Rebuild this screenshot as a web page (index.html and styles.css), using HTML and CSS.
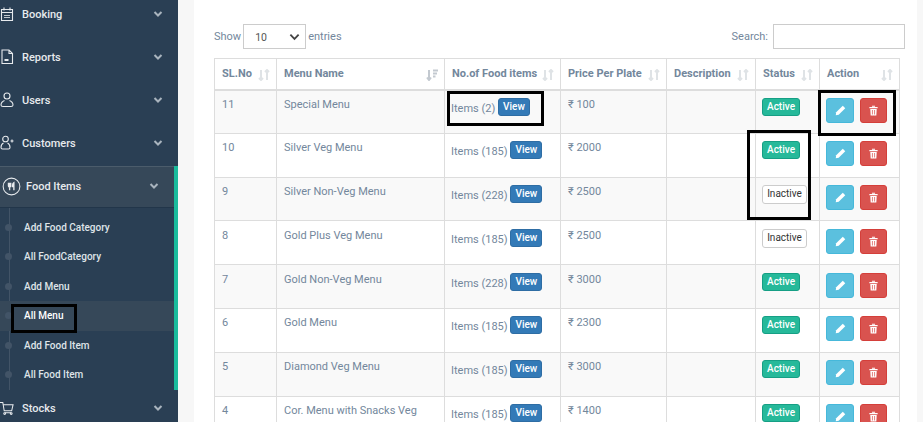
FILE: index.html
```html
<!DOCTYPE html>
<html lang="en">
<head>
<meta charset="utf-8">
<title>All Menu</title>
<link rel="stylesheet" href="styles.css">
</head>
<body>
<div class="app">
<aside class="sidebar">
  <div class="nav-item first"><svg class="nav-icon" viewBox="0 0 14 15"><path d="M1.500 3h11v11h-11zM1.500 6h11M4 1v3M10 1v3"/><path class="thin" d="M4 9h6M4 11h6"/></svg><span>Booking</span><svg class="chev" viewBox="0 0 10 6"><path d="M1.500 1l3.500 3.500L8.500 1"/></svg></div>
  <div class="nav-item"><svg class="nav-icon" viewBox="0 0 14 16"><path d="M2 1h7l3.500 3.500V14.500H2zM9 1v3.500h3.500"/><path class="solid" d="M4.500 10h4v2h-4z"/></svg><span>Reports</span><svg class="chev" viewBox="0 0 10 6"><path d="M1.500 1l3.500 3.500L8.500 1"/></svg></div>
  <div class="nav-item"><svg class="nav-icon" viewBox="0 0 14 16"><circle cx="7" cy="4" r="3"/><path d="M4.500 8.500C2 9.500 1 11 1 13c0 1 1 1.500 2 1.500h8c1 0 2-.5 2-1.500 0-2-1-3.500-3.500-4.500"/></svg><span>Users</span><svg class="chev" viewBox="0 0 10 6"><path d="M1.500 1l3.500 3.500L8.500 1"/></svg></div>
  <div class="nav-item"><svg class="nav-icon" viewBox="0 0 14 16"><circle cx="5.500" cy="4" r="2.800"/><path d="M3.500 8C1.500 9 1 10.500 1 12.500c0 1 .8 1.500 1.500 1.500h6c1 0 1.500-.5 1.500-1.500 0-2-.5-3.500-2.500-4.500M10.500 6h3M12 4.500v3"/></svg><span>Customers</span><svg class="chev" viewBox="0 0 10 6"><path d="M1.500 1l3.500 3.500L8.500 1"/></svg></div>
  <div class="nav-group">
    <div class="nav-item open"><svg class="food-icon" viewBox="0 0 20 20"><circle cx="10" cy="10" r="8.800"/><path class="cutlery" d="M6.800 6v3.500c0 .8.500 1 1.200 1s1.200-.2 1.200-1V6M8 6v8M12.500 14V6c-1 .5-1.500 2-1.500 4h1.500"/></svg><span>Food Items</span><svg class="chev" viewBox="0 0 10 6"><path d="M1.500 1l3.500 3.500L8.500 1"/></svg></div>
    <ul class="submenu">
      <li>Add Food Category</li>
      <li>All FoodCategory</li>
      <li>Add Menu</li>
      <li class="current">All Menu</li>
      <li>Add Food Item</li>
      <li>All Food Item</li>
    </ul>
  </div>
  <div class="nav-item last"><svg class="nav-icon" viewBox="0 0 15 15"><path d="M0 1.500h3l1.500 9h8l1.500-6.500H3.500M5 12.500h7"/><circle cx="5" cy="13.500" r="1"/><circle cx="12" cy="13.500" r="1"/></svg><span>Stocks</span><svg class="chev" viewBox="0 0 10 6"><path d="M1.500 1l3.500 3.500L8.500 1"/></svg></div>
</aside>
<main class="main">
  <div class="panel">
    <div class="controls">
      <label class="length">Show <span class="select"><span>10</span><svg viewBox="0 0 12 8"><path d="M1.500 1.500L6 6l4.500-4.500"/></svg></span> entries</label>
      <label class="search">Search: <span class="search-box"></span></label>
    </div>
    <table class="grid">
      <thead>
        <tr>
          <th>SL.No<svg class="sort" viewBox="0 0 12 12"><path d="M3 1v10M1 9l2 2 2-2M9 11V1M7 3l2-2 2 2"/></svg></th>
          <th>Menu Name<svg class="sort on" viewBox="0 0 12 12"><path d="M3 1v10M1 8.500l2 2.500 2-2.500M7 1.500h5M7 4.500h4M7 7.500h2.500"/></svg></th>
          <th>No.of Food items<svg class="sort" viewBox="0 0 12 12"><path d="M3 1v10M1 9l2 2 2-2M9 11V1M7 3l2-2 2 2"/></svg></th>
          <th>Price Per Plate<svg class="sort" viewBox="0 0 12 12"><path d="M3 1v10M1 9l2 2 2-2M9 11V1M7 3l2-2 2 2"/></svg></th>
          <th>Description<svg class="sort" viewBox="0 0 12 12"><path d="M3 1v10M1 9l2 2 2-2M9 11V1M7 3l2-2 2 2"/></svg></th>
          <th>Status<svg class="sort" viewBox="0 0 12 12"><path d="M3 1v10M1 9l2 2 2-2M9 11V1M7 3l2-2 2 2"/></svg></th>
          <th>Action<svg class="sort" viewBox="0 0 12 12"><path d="M3 1v10M1 9l2 2 2-2M9 11V1M7 3l2-2 2 2"/></svg></th>
        </tr>
      </thead>
      <tbody>
        <tr><td>11</td><td>Special Menu</td><td class="items"><span class="count">Items (2)</span> <a class="view">View</a></td><td>₹ 100</td><td></td><td class="st"><span class="pill active">Active</span></td><td class="acts"><a class="act edit"><svg viewBox="0 0 12 12"><path d="M8.500 .8l2.700 2.700L4 10.700 .8 11.200l.5-3.200z"/></svg></a><a class="act del"><svg viewBox="0 0 12 12"><path fill-rule="evenodd" d="M1.500 2.300h9v1.300h-9zM4.300 .8h3.400v1.200H4.300zM2.500 4.300h7l-.4 7.200H2.900zM4.300 5.500v4.800h.8V5.500zM6.900 5.500v4.800h.8V5.500z"/></svg></a></td></tr>
        <tr><td>10</td><td>Silver Veg Menu</td><td class="items"><span class="count">Items (185)</span> <a class="view">View</a></td><td>₹ 2000</td><td></td><td class="st"><span class="pill active">Active</span></td><td class="acts"><a class="act edit"><svg viewBox="0 0 12 12"><path d="M8.500 .8l2.700 2.700L4 10.700 .8 11.200l.5-3.200z"/></svg></a><a class="act del"><svg viewBox="0 0 12 12"><path fill-rule="evenodd" d="M1.500 2.300h9v1.300h-9zM4.300 .8h3.400v1.200H4.300zM2.500 4.300h7l-.4 7.200H2.900zM4.300 5.500v4.800h.8V5.500zM6.900 5.500v4.800h.8V5.500z"/></svg></a></td></tr>
        <tr><td>9</td><td>Silver Non-Veg Menu</td><td class="items"><span class="count">Items (228)</span> <a class="view">View</a></td><td>₹ 2500</td><td></td><td class="st"><span class="pill inactive">Inactive</span></td><td class="acts"><a class="act edit"><svg viewBox="0 0 12 12"><path d="M8.500 .8l2.700 2.700L4 10.700 .8 11.200l.5-3.200z"/></svg></a><a class="act del"><svg viewBox="0 0 12 12"><path fill-rule="evenodd" d="M1.500 2.300h9v1.300h-9zM4.300 .8h3.400v1.200H4.300zM2.500 4.300h7l-.4 7.200H2.900zM4.300 5.500v4.800h.8V5.500zM6.900 5.500v4.800h.8V5.500z"/></svg></a></td></tr>
        <tr><td>8</td><td>Gold Plus Veg Menu</td><td class="items"><span class="count">Items (185)</span> <a class="view">View</a></td><td>₹ 2500</td><td></td><td class="st"><span class="pill inactive">Inactive</span></td><td class="acts"><a class="act edit"><svg viewBox="0 0 12 12"><path d="M8.500 .8l2.700 2.700L4 10.700 .8 11.200l.5-3.200z"/></svg></a><a class="act del"><svg viewBox="0 0 12 12"><path fill-rule="evenodd" d="M1.500 2.300h9v1.300h-9zM4.300 .8h3.400v1.200H4.300zM2.500 4.300h7l-.4 7.200H2.900zM4.300 5.500v4.800h.8V5.500zM6.900 5.500v4.800h.8V5.500z"/></svg></a></td></tr>
        <tr><td>7</td><td>Gold Non-Veg Menu</td><td class="items"><span class="count">Items (228)</span> <a class="view">View</a></td><td>₹ 3000</td><td></td><td class="st"><span class="pill active">Active</span></td><td class="acts"><a class="act edit"><svg viewBox="0 0 12 12"><path d="M8.500 .8l2.700 2.700L4 10.700 .8 11.200l.5-3.200z"/></svg></a><a class="act del"><svg viewBox="0 0 12 12"><path fill-rule="evenodd" d="M1.500 2.300h9v1.300h-9zM4.300 .8h3.400v1.200H4.300zM2.500 4.300h7l-.4 7.200H2.900zM4.300 5.500v4.800h.8V5.500zM6.900 5.500v4.800h.8V5.500z"/></svg></a></td></tr>
        <tr><td>6</td><td>Gold Menu</td><td class="items"><span class="count">Items (185)</span> <a class="view">View</a></td><td>₹ 2300</td><td></td><td class="st"><span class="pill active">Active</span></td><td class="acts"><a class="act edit"><svg viewBox="0 0 12 12"><path d="M8.500 .8l2.700 2.700L4 10.700 .8 11.200l.5-3.200z"/></svg></a><a class="act del"><svg viewBox="0 0 12 12"><path fill-rule="evenodd" d="M1.500 2.300h9v1.300h-9zM4.300 .8h3.400v1.200H4.300zM2.500 4.300h7l-.4 7.200H2.900zM4.300 5.500v4.800h.8V5.500zM6.900 5.500v4.800h.8V5.500z"/></svg></a></td></tr>
        <tr><td>5</td><td>Diamond Veg Menu</td><td class="items"><span class="count">Items (185)</span> <a class="view">View</a></td><td>₹ 3000</td><td></td><td class="st"><span class="pill active">Active</span></td><td class="acts"><a class="act edit"><svg viewBox="0 0 12 12"><path d="M8.500 .8l2.700 2.700L4 10.700 .8 11.200l.5-3.200z"/></svg></a><a class="act del"><svg viewBox="0 0 12 12"><path fill-rule="evenodd" d="M1.500 2.300h9v1.300h-9zM4.300 .8h3.400v1.200H4.300zM2.500 4.300h7l-.4 7.200H2.900zM4.300 5.500v4.800h.8V5.500zM6.900 5.500v4.800h.8V5.500z"/></svg></a></td></tr>
        <tr><td>4</td><td>Cor. Menu with Snacks Veg</td><td class="items"><span class="count">Items (185)</span> <a class="view">View</a></td><td>₹ 1400</td><td></td><td class="st"><span class="pill active">Active</span></td><td class="acts"><a class="act edit"><svg viewBox="0 0 12 12"><path d="M8.500 .8l2.700 2.700L4 10.700 .8 11.200l.5-3.200z"/></svg></a><a class="act del"><svg viewBox="0 0 12 12"><path fill-rule="evenodd" d="M1.500 2.300h9v1.300h-9zM4.300 .8h3.400v1.200H4.300zM2.500 4.300h7l-.4 7.200H2.900zM4.300 5.500v4.800h.8V5.500zM6.900 5.500v4.800h.8V5.500z"/></svg></a></td></tr>
      </tbody>
    </table>
  </div>
</main>
</div>
<div class="mark mark-menu"></div>
<div class="mark mark-items"></div>
<div class="mark mark-status"></div>
<div class="mark mark-action"></div>
</body>
</html>
```
FILE: styles.css
```css
* { box-sizing: border-box; }
html, body { margin: 0; height: 422px; overflow: hidden; }
body { position: relative; font-family: Roboto, "Liberation Sans", sans-serif; font-size: 11px; color: #73879c; background: #f7f7f7; }
.app { display: flex; height: 422px; overflow: hidden; }

.sidebar { width: 178px; flex: none; background: #2a3f54; color: #ecf0f1; margin-top: -7.500px; height: 440px; }
.nav-item { display: flex; align-items: center; height: 43px; font-size: 11px; font-weight: 500; color: #e7eaed; }
.nav-item span { flex: 1; margin-left: 8px; }
.nav-icon { width: 14px; height: 16px; fill: none; stroke: #e7eaed; stroke-width: 1.1; flex: none; }
.nav-icon .solid { fill: #e7eaed; stroke: none; }
.nav-icon .thin { stroke-width: .8; }
.chev { width: 10px; height: 6px; margin-right: 15px; fill: none; stroke: #a9b4be; stroke-width: 2; flex: none; }
.nav-item.last { height: 37px; }

.nav-group { margin-top: 1.500px; border-right: 4px solid #1abb9c; }
.nav-item.open { height: 42px; background: #364859; border-top: 1px solid #4b5c6b; border-bottom: 1px solid #22364a; padding: 0 0 2px 2px; }
.nav-item.open span { margin-left: 5px; }
.food-icon { width: 19px; height: 19px; fill: none; stroke: #e7eaed; stroke-width: 1.1; flex: none; }
.food-icon .cutlery { stroke-width: 1.4; }

.submenu { list-style: none; margin: 0; padding: 4.500px 0 0; position: relative; }
.submenu::before { content: ""; position: absolute; left: 9px; top: 0; bottom: 0; width: 1px; background: #425467; }
.submenu li { position: relative; height: 29.500px; line-height: 29.500px; padding-left: 24px; font-size: 10px; font-weight: 500; color: #dfe4e8; }
.submenu li::before { content: ""; position: absolute; left: 5px; top: 11px; width: 7px; height: 7px; border-radius: 50%; background: #425467; }
.submenu li.current { background: #364859; color: #fff; }

.main { flex: none; width: 723px; margin-left: 16px; background: #fff; }
.panel { padding: 24px 18px 0 20px; }
.controls { display: flex; justify-content: space-between; align-items: center; height: 25px; margin-right: -6px; }
.length { display: flex; align-items: center; gap: 2px; }
.select { display: flex; align-items: center; justify-content: space-between; width: 63px; height: 25px; border: 1px solid #ccc; padding: 1px 5px 0 11px; font-size: 10.500px; color: #555; }
.select svg { width: 11px; height: 8px; fill: none; stroke: #444; stroke-width: 2; }
.search { display: flex; align-items: center; gap: 5px; }
.search-box { display: block; width: 132px; height: 25px; border: 1px solid #ccc; }

.grid { width: 685px; margin-top: 9px; table-layout: fixed; border-collapse: collapse; }
.grid th:nth-child(1) { width: 62px; }
.grid th:nth-child(2) { width: 168px; }
.grid th:nth-child(3) { width: 116px; }
.grid th:nth-child(4) { width: 106px; }
.grid th:nth-child(5) { width: 89px; }
.grid th:nth-child(6) { width: 64px; }
.grid th:nth-child(7) { width: 80px; }
.grid th, .grid td { border: 1px solid #ddd; padding: 0 0 0 7px; text-align: left; }
.grid th { position: relative; height: 31px; font-weight: 700; border-bottom-width: 2px; }
.grid td { height: 43.800px; vertical-align: top; padding-top: 7.500px; line-height: 14px; }
.grid tbody tr:nth-child(odd) td { background: #f9f9f9; }
.sort { position: absolute; right: 6.500px; top: 9.500px; width: 12px; height: 12px; fill: none; stroke: #dfe3e6; stroke-width: 2; }
.sort.on { stroke: #c3c9d0; }

.grid td.items { padding-left: 6px; }
.count { position: relative; top: 2px; }
.view { display: inline-block; width: 32px; height: 18px; line-height: 16px; text-align: center; background: #337ab7; border: 1px solid #2e6da4; border-radius: 3px; color: #fff; font-size: 10px; font-weight: 500; }
.grid td.st { padding-left: 6px; }
.pill { display: block; height: 18px; line-height: 16px; text-align: center; border-radius: 3px; font-size: 10px; font-weight: 500; }
.pill.active { width: 38px; background: #26b99a; border: 1px solid #169f85; color: #fff; }
.pill.inactive { width: 45px; height: 19px; background: #fff; border: 1px solid #ccc; color: #333; font-weight: 400; }
.grid td.acts { white-space: nowrap; padding-left: 6px; }
.act { display: inline-flex; align-items: center; justify-content: center; height: 25px; border-radius: 3px; vertical-align: top; }
.act svg { width: 11px; height: 11px; fill: #fff; }
.edit { width: 28px; background: #5bc0de; border: 1px solid #46b8da; }
.del { width: 27px; margin-left: 6px; background: #d9534f; border: 1px solid #d43f3a; }

.mark { position: absolute; border: 3px solid #000; }
.mark-menu { left: 11px; top: 304px; width: 66px; height: 29px; }
.mark-items { left: 447px; top: 91px; width: 97px; height: 35px; }
.mark-status { left: 747px; top: 130px; width: 64px; height: 90px; }
.mark-action { left: 818px; top: 90px; width: 78px; height: 46px; }
```
